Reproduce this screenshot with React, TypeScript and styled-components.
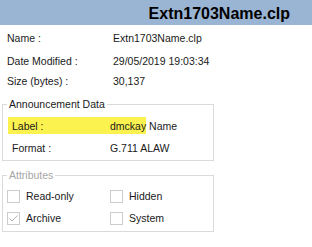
import React, { FC } from 'react';
import styled, { createGlobalStyle } from 'styled-components';

const GlobalStyle = createGlobalStyle`
    html, body {
        margin: 0;
        padding: 0;
        background: #ffffff;
    }
    body {
        font-family: "Liberation Sans", Arial, sans-serif;
        font-size: 10.5px;
        color: #1a1a1a;
    }
`;

const Page = styled.div`
    width: 312px;
    height: 247px;
    overflow: hidden;
    background: #ffffff;
`;

const TitleBar = styled.div`
    height: 25px;
    background: #9ab5d3;
    display: flex;
    justify-content: flex-end;
    align-items: flex-end;
    padding: 0 22px 2px 0;
    box-sizing: border-box;
`;

const Title = styled.div`
    font-size: 16px;
    font-weight: 700;
    color: #000000;
    line-height: 19px;
`;

const InfoList = styled.div`
    padding-left: 7px;
`;

const InfoRow = styled.div<{ $top: number }>`
    display: grid;
    grid-template-columns: 106px 1fr;
    height: 16px;
    line-height: 16px;
    margin-top: ${p => p.$top}px;
`;

const Group = styled.div<{ $top: number; $pad: string }>`
    position: relative;
    width: 212px;
    margin: ${p => p.$top}px 0 0 2px;
    border: 1px solid #dadada;
    box-sizing: border-box;
    padding: ${p => p.$pad};
`;

const GroupTitle = styled.span<{ $muted?: boolean }>`
    position: absolute;
    top: -7px;
    left: 4px;
    padding: 0 2px;
    line-height: 13px;
    background: #ffffff;
    color: ${p => (p.$muted ? '#a6a6a6' : '#1a1a1a')};
`;

const DataRow = styled.div<{ $top?: number }>`
    display: flex;
    align-items: center;
    height: 17px;
    margin-top: ${p => p.$top ?? 0}px;
`;

const Highlight = styled.span`
    display: flex;
    align-items: center;
    height: 17px;
    margin-left: 5px;
    padding-left: 4px;
    background: #fbf250;
`;

const DataLabel = styled.span<{ $indent?: boolean }>`
    display: inline-block;
    width: 98px;
    padding-left: ${p => (p.$indent ? '9px' : '0')};
`;

const Trailing = styled.span`
    white-space: pre;
`;

const CheckGrid = styled.div`
    display: grid;
    grid-template-columns: 103px 1fr;
    row-gap: 9px;
`;

const CheckItem = styled.label`
    display: flex;
    align-items: center;
    gap: 6px;
    height: 13px;
    line-height: 13px;
`;

const Box = styled.span`
    width: 13px;
    height: 13px;
    box-sizing: border-box;
    border: 1px solid #cccccc;
    background: #ffffff;
    display: flex;
    align-items: center;
    justify-content: center;
`;

interface CheckProps {
    label: string;
    checked?: boolean;
}

const Check: FC<CheckProps> = ({ label, checked }) => (
    <CheckItem>
        <Box>
            {checked && (
                <svg width="11" height="11" viewBox="0 0 11 11">
                    <polyline points="1.5,5.5 4,8 9.5,2.5" fill="none" stroke="#b3b3b3" strokeWidth="1" />
                </svg>
            )}
        </Box>
        <span>{label}</span>
    </CheckItem>
);

const App: FC = () => (
    <Page>
        <GlobalStyle />
        <TitleBar>
            <Title>Extn1703Name.clp</Title>
        </TitleBar>

        <InfoList>
            <InfoRow $top={5}>
                <span>Name :</span>
                <span>Extn1703Name.clp</span>
            </InfoRow>
            <InfoRow $top={7}>
                <span>Date Modified :</span>
                <span>29/05/2019 19:03:34</span>
            </InfoRow>
            <InfoRow $top={4}>
                <span>Size (bytes) :</span>
                <span>30,137</span>
            </InfoRow>
        </InfoList>

        <Group $top={15} $pad="12px 0 4px 0">
            <GroupTitle>Announcement Data</GroupTitle>
            <DataRow>
                <Highlight>
                    <DataLabel>Label :</DataLabel>
                    <span>dmckay</span>
                </Highlight>
                <Trailing> Name</Trailing>
            </DataRow>
            <DataRow $top={5}>
                <DataLabel $indent>Format :</DataLabel>
                <span>G.711 ALAW</span>
            </DataRow>
        </Group>

        <Group $top={14} $pad="14px 0 6px 4px">
            <GroupTitle $muted>Attributes</GroupTitle>
            <CheckGrid>
                <Check label="Read-only" />
                <Check label="Hidden" />
                <Check label="Archive" checked />
                <Check label="System" />
            </CheckGrid>
        </Group>
    </Page>
);

export default App;
